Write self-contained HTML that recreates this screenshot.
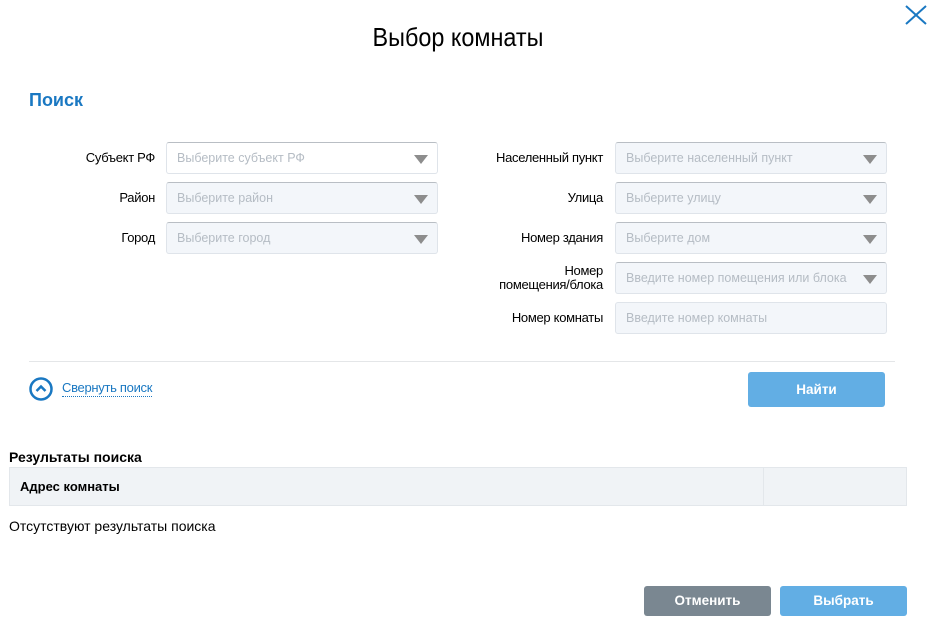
<!DOCTYPE html>
<html><head><meta charset="utf-8"><style>
body{margin:0;width:932px;height:621px;background:#fff;position:relative;overflow:hidden;font-family:"Liberation Sans Narrow","Liberation Sans",sans-serif;color:#000}
.a{position:absolute}
.t{left:-8px;width:932px;top:22px;text-align:center;font-size:26px;font-family:"Liberation Sans",sans-serif;transform:scaleX(.9)}
.lbl{font-size:13px;text-align:right;width:140px;letter-spacing:-0.3px}
.in{border:1px solid #dfe4ea;border-top-color:#b9bec4;border-radius:3px;background:#f3f6fa;font-size:12.5px;color:#b5bcc4;line-height:30px;padding-left:10px;box-sizing:border-box;height:32px;width:272px}
.in.w{background:#fff}
.in .ar{position:absolute;right:9px;top:12px;width:0;height:0;border-left:7px solid transparent;border-right:7px solid transparent;border-top:9px solid #8d8d8d}
.btn{color:#fff;font-size:13.5px;font-weight:bold;text-align:center;border-radius:3px}
</style></head><body>
<div class="a t">Выбор комнаты</div>
<svg class="a" style="left:905px;top:5px" width="22" height="20"><path d="M1 1L21 19M21 1L1 19" stroke="#1a78c2" stroke-width="2"/></svg>
<div class="a" style="left:29px;top:90px;font-size:18px;color:#1a78c2;font-weight:bold">Поиск</div>

<div class="a lbl" style="left:15px;top:150px">Субъект РФ</div>
<div class="a in w" style="left:166px;top:142px">Выберите субъект РФ<span class="ar"></span></div>
<div class="a lbl" style="left:15px;top:190px">Район</div>
<div class="a in" style="left:166px;top:182px">Выберите район<span class="ar"></span></div>
<div class="a lbl" style="left:15px;top:230px">Город</div>
<div class="a in" style="left:166px;top:222px">Выберите город<span class="ar"></span></div>

<div class="a lbl" style="left:463px;top:150px">Населенный пункт</div>
<div class="a in" style="left:615px;top:142px">Выберите населенный пункт<span class="ar"></span></div>
<div class="a lbl" style="left:463px;top:190px">Улица</div>
<div class="a in" style="left:615px;top:182px">Выберите улицу<span class="ar"></span></div>
<div class="a lbl" style="left:463px;top:230px">Номер здания</div>
<div class="a in" style="left:615px;top:222px">Выберите дом<span class="ar"></span></div>
<div class="a lbl" style="left:463px;top:264px;line-height:14px">Номер<br>помещения/блока</div>
<div class="a in" style="left:615px;top:262px">Введите номер помещения или блока<span class="ar"></span></div>
<div class="a lbl" style="left:463px;top:310px">Номер комнаты</div>
<div class="a in" style="left:615px;top:302px;border-top-color:#dfe4ea">Введите номер комнаты</div>

<div class="a" style="left:29px;top:361px;width:866px;height:1px;background:#e4e6e8"></div>
<svg class="a" style="left:29px;top:377px" width="24" height="24"><circle cx="12" cy="12" r="10.5" fill="none" stroke="#1a78c2" stroke-width="2.5"/><path d="M7.5 14L12 9.5L16.5 14" fill="none" stroke="#1a78c2" stroke-width="2.5"/></svg>
<div class="a" style="left:62px;top:380px;font-size:13px;color:#1a78c2;border-bottom:1px dotted #1a78c2;padding-bottom:1px;letter-spacing:-0.3px">Свернуть поиск</div>
<div class="a btn" style="left:748px;top:372px;width:137px;height:35px;line-height:35px;background:#62aee4">Найти</div>

<div class="a" style="left:9px;top:449px;font-size:14px;font-weight:bold">Результаты поиска</div>
<div class="a" style="left:9px;top:467px;width:896px;height:37px;background:#f0f3f6;border:1px solid #e3e7eb"></div>
<div class="a" style="left:763px;top:468px;width:1px;height:37px;background:#e3e7eb"></div>
<div class="a" style="left:20px;top:479px;font-size:13px;font-weight:bold">Адрес комнаты</div>
<div class="a" style="left:9px;top:518px;font-size:14px">Отсутствуют результаты поиска</div>

<div class="a btn" style="left:644px;top:586px;width:127px;height:30px;line-height:30px;background:#7a8791">Отменить</div>
<div class="a btn" style="left:780px;top:586px;width:127px;height:30px;line-height:30px;background:#62aee4">Выбрать</div>
</body></html>
